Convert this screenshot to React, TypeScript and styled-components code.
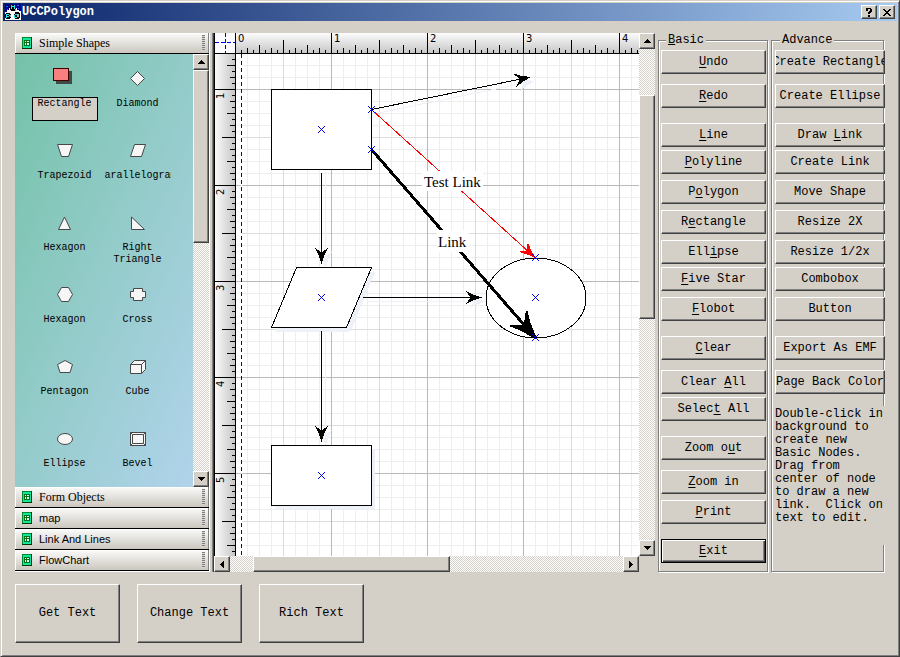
import React from "react";
import styled, { createGlobalStyle, css } from "styled-components";

const face = "#d4d0c8";
const mono = '"Liberation Mono", monospace';

const GlobalStyle = createGlobalStyle`
  *, *::before, *::after { box-sizing: border-box; }
  body { margin: 0; background: ${face}; color: #000; font: 12px/13px ${mono}; }
  button { margin: 0; padding: 0; border: 0; border-radius: 0; color: inherit; font: inherit; background: ${face}; }
  svg { display: block; }
`;

const raised = css`
  border: 1px solid;
  border-color: #fff #404040 #404040 #fff;
  box-shadow: inset -1px -1px 0 #808080;
  background: ${face};
`;

const checker = css`
  background: repeating-conic-gradient(#fff 0 25%, ${face} 0 50%) 0 0 / 2px 2px;
`;

const Window = styled.div`
  display: flex;
  flex-direction: column;
  min-height: 100vh;
  padding: 2px;
  border: 1px solid;
  border-color: ${face} #404040 #404040 ${face};
  box-shadow: inset 1px 1px 0 #fff, inset -1px -1px 0 #808080;
`;

const TitleBar = styled.header`
  display: flex;
  align-items: center;
  gap: 1px;
  height: 18px;
  padding: 0 2px;
  color: #fff;
  background: linear-gradient(to right, #0a246a, #a6caf0);
`;

const Title = styled.h1`
  flex: 1;
  margin: 0;
  font: bold 12px/16px ${mono};
`;

const CaptionButton = styled.button`
  ${raised}
  display: flex;
  align-items: center;
  justify-content: center;
  width: 16px;
  height: 14px;
  margin-left: 1px;
  color: #000;
`;

const Main = styled.main`
  display: flex;
  padding: 12px 13px 0 12px;
`;

const Sidebar = styled.nav`
  display: flex;
  flex-direction: column;
  width: 195px;
  margin-right: 2px;
  border: solid #fff;
  border-width: 0 1px 1px 0;
`;

const SectionButton = styled.button<{ $serif?: boolean }>`
  display: flex;
  align-items: center;
  gap: 7px;
  height: 21px;
  padding: 0 4px 0 7px;
  border: solid #000;
  border-width: 0 0 1px;
  box-shadow: inset -1px 0 0 #808080, inset 1px 1px 0 #fff;
  background: linear-gradient(#fbfbfa, #cbc7bf);
  text-align: left;
  font: ${(p) => (p.$serif ? '12px/16px "Liberation Serif", serif' : '11px/16px "Liberation Sans", sans-serif')};
`;

const SectionName = styled.span`
  flex: 1;
`;

const Grip = styled.span`
  width: 3px;
  height: 16px;
  background: repeating-linear-gradient(#808080 0 1px, #d8d6d2 1px 2px);
`;

const Palette = styled.div`
  display: flex;
  flex: 1;
  background: linear-gradient(to bottom right, #74c2a8, #92cbc8 45%, #b3d4ee);
`;

const ShapeGrid = styled.div`
  flex: 1;
  display: grid;
  grid-template-columns: 73px 73px;
  grid-auto-rows: 55px;
  row-gap: 17px;
  padding: 12px 0 0 13px;
`;

const ShapeButton = styled.button`
  display: flex;
  flex-direction: column;
  align-items: center;
  gap: 7px;
  background: none;
`;

const ShapeLabel = styled.span<{ $selected?: boolean }>`
  display: flex;
  justify-content: center;
  width: 66px;
  height: 24px;
  border: 1px solid ${(p) => (p.$selected ? "#000" : "transparent")};
  border-width: 1px 0;
  background: ${(p) => (p.$selected ? face : "none")};
  box-shadow: ${(p) => (p.$selected ? "inset 1px 0 0 #000, inset -1px 0 0 #000" : "none")};
  overflow: hidden;
  font: 10px/12px ${mono};
  white-space: pre;
`;

const Bar = styled.div<{ $vertical?: boolean }>`
  ${checker}
  display: flex;
  flex-direction: ${(p) => (p.$vertical ? "column" : "row")};
`;

const BarButton = styled.button`
  ${raised}
  display: flex;
  align-items: center;
  justify-content: center;
  flex: none;
  width: 16px;
  height: 16px;
`;

const Share = styled.div<{ $share: number }>`
  flex: ${(p) => p.$share} 1 0;
`;

const Thumb = styled(Share)`
  ${raised}
`;

const Canvas = styled.section`
  flex: 1;
  min-width: 0;
  display: grid;
  grid-template-columns: 22px minmax(0, 1fr) 16px;
  grid-template-rows: 21px minmax(0, 1fr) 16px;
  margin-right: 3px;
  border-left: 1px solid #808080;
  box-shadow: inset 1px 0 0 #404040;
  padding-left: 1px;
`;

const SideBar = styled(Bar)`
  grid-column: 3;
  grid-row: 1 / 3;
`;

const BottomBar = styled(Bar)`
  grid-column: 1 / 3;
  grid-row: 3;
`;

const Drawing = styled.svg`
  width: 100%;
  height: 100%;
  min-height: 0;
  overflow: hidden;
`;

const RulerText = styled.text`
  font: 10px "DejaVu Sans", sans-serif;
`;

const LinkText = styled.text`
  font: 15px "Liberation Serif", serif;
`;

const Group = styled.fieldset<{ $width: number }>`
  flex: none;
  display: flex;
  flex-direction: column;
  width: ${(p) => p.$width}px;
  min-width: 0;
  margin: 0;
  padding: 3px 2px 8px;
  border: 1px solid #808080;
  box-shadow: 1px 1px 0 #fff, inset 1px 1px 0 #fff;
`;

const BasicGroup = styled(Group)`
  margin-right: 3px;
`;

const AdvanceGroup = styled(Group)`
  padding: 3px 0 8px 3px;
`;

const Legend = styled.legend`
  margin-left: 5px;
  padding: 1px 2px 0;
  background: ${face};
  line-height: 13px;
`;

const Column = styled.div<{ $width: number }>`
  display: flex;
  flex-direction: column;
  width: ${(p) => p.$width}px;
`;

const PushButton = styled.button<{ $gap?: number; $default?: boolean }>`
  ${raised}
  display: flex;
  align-items: center;
  justify-content: center;
  height: 24px;
  margin-top: ${(p) => p.$gap ?? 0}px;
  overflow: hidden;
  white-space: pre;
  ${(p) =>
    p.$default &&
    css`
      border-color: #000;
      box-shadow: inset 1px 1px 0 #fff, inset -1px -1px 0 #404040, inset -2px -2px 0 #808080;
    `}
  u { text-underline-offset: 2px; }
`;

const Hint = styled.p`
  margin: 12px 0 0;
  padding: 2px 0 20px;
  background: ${face};
  white-space: pre-wrap;
`;

const Footer = styled.footer`
  display: flex;
  gap: 17px;
  padding: 12px 12px 0;
`;

const LargeButton = styled(PushButton)`
  width: 105px;
  height: 59px;
`;

type Dir = "up" | "down" | "left" | "right";
const arrows: Record<Dir, string> = {
  up: "M3 0h1v1h1v1h1v1h1v1H0V3h1V2h1V1h1z",
  down: "M0 0h7v1H6v1H5v1H4v1H3V3H2V2H1V1H0z",
  left: "M0 3h1V2h1V1h1V0h1v7H3V6H2V5H1V4H0z",
  right: "M0 0h1v1h1v1h1v1h1v1H3v1H2v1H1v1H0z",
};

function ScrollButton({ dir }: { dir: Dir }) {
  const upright = dir === "up" || dir === "down";
  return (
    <BarButton type="button" aria-label={`Scroll ${dir}`}>
      <svg width={upright ? 7 : 4} height={upright ? 4 : 7} shapeRendering="crispEdges">
        <path d={arrows[dir]} />
      </svg>
    </BarButton>
  );
}

const outline = { fill: "#f6f6f6", stroke: "#484848" };

const shapes: { label: string; icon: React.ReactNode }[] = [
  {
    label: "Rectangle",
    icon: (
      <>
        <rect x="3" y="5" width="16" height="13" fill="#404848" />
        <rect x="0.5" y="2.5" width="15" height="12" fill="#f88080" stroke="#400000" />
      </>
    ),
  },
  { label: "Diamond", icon: <path {...outline} d="M11.5 5.5l7 7-7 7-7-7z" /> },
  { label: "Trapezoid", icon: <path {...outline} d="M4.5 6.5h15l-4 12h-7z" /> },
  { label: "Parallelogram", icon: <path {...outline} d="M8.5 6.5h11l-4 12h-11z" /> },
  { label: "Hexagon", icon: <path {...outline} d="M11.5 7l6 12.5h-12z" /> },
  { label: "Right\nTriangle", icon: <path {...outline} d="M5.5 7l13 12.5h-13z" /> },
  { label: "Hexagon", icon: <path {...outline} d="M4.5 12.5l4-7h7l4 7-4 7h-7z" /> },
  { label: "Cross", icon: <path {...outline} d="M7.5 6.5h9v3h3v6h-3v3h-9v-3h-3v-6h3z" /> },
  { label: "Pentagon", icon: <path {...outline} d="M12 6.5l7.5 4-2.5 8H7l-2.5-8z" /> },
  {
    label: "Cube",
    icon: <path {...outline} d="M4.5 10.5l4-4h11v9l-4 4h-11zM4.5 10.5h11v9M15.5 10.5l4-4" />,
  },
  { label: "Ellipse", icon: <ellipse {...outline} cx="12" cy="13" rx="7.5" ry="5.5" /> },
  {
    label: "Bevel",
    icon: (
      <path {...outline} d="M4.5 6.5h15v13h-15zM6.5 8.5h11v9h-11zM4.5 6.5l2 2M19.5 6.5l-2 2M4.5 19.5l2-2M19.5 19.5l-2-2" />
    ),
  },
];

function Section({ name, serif }: { name: string; serif?: boolean }) {
  return (
    <SectionButton type="button" $serif={serif}>
      <svg width="10" height="12" shapeRendering="crispEdges">
        <rect width="10" height="12" fill="#003800" />
        <path d="M0 0h9v11H0z" fill="#008830" />
        <path d="M1 1h8v10H1z" fill="#10e8a0" />
        <path d="M2 3h6v6H2z" fill="#e8fff0" />
        <path d="M2 3h6v1H2zM2 8h6v1H2zM2 3h1v6H2zM7 3h1v6H7zM2 5h6v1H2zM5 3v6H4V3z" fill="#087018" />
      </svg>
      <SectionName>{name}</SectionName>
      <Grip />
    </SectionButton>
  );
}

function Corner() {
  return (
    <Drawing shapeRendering="crispEdges">
      <rect width="22" height="21" fill="#fafaff" />
      <path d="M0.5 0v21M21.5 0v21M0 20.5h22" stroke="#000" />
      <path d="M1 9.5h20M11.5 0v20" stroke="#0000e0" strokeDasharray="4 2" />
    </Drawing>
  );
}

const inch = 96;
const steps = [6, 12, 18, 24, 30, 36, 42, 48, 54, 60, 66, 72, 78, 84, 90];
const tick = (n: number) => (n === 48 ? 13 : n % 24 === 0 ? 8 : n % 12 === 0 ? 5 : 3);
const marks = Array.from({ length: 20 }, (_, i) => i);

function TopRuler() {
  return (
    <Drawing shapeRendering="crispEdges">
      <defs>
        <linearGradient id="topShade" x2="0" y2="1">
          <stop stopColor="#fcfcfc" />
          <stop offset="1" stopColor="#c4c4c4" />
        </linearGradient>
        <pattern id="topTicks" x="-1" width={inch} height="21" patternUnits="userSpaceOnUse">
          <rect width="1" height="21" />
          {steps.map((n) => (
            <rect key={n} x={n} y={20 - tick(n)} width="1" height={tick(n)} />
          ))}
        </pattern>
      </defs>
      <rect width="100%" height="21" fill="url(#topShade)" />
      <rect width="100%" height="21" fill="url(#topTicks)" />
      <rect y="20" width="100%" height="1" />
      {marks.map((n) => (
        <RulerText key={n} x={n * inch + 2} y="9">
          {n}
        </RulerText>
      ))}
    </Drawing>
  );
}

function LeftRuler() {
  return (
    <Drawing shapeRendering="crispEdges">
      <defs>
        <linearGradient id="leftShade">
          <stop stopColor="#fcfcfc" />
          <stop offset="1" stopColor="#c4c4c4" />
        </linearGradient>
        <pattern id="leftTicks" y="35" width="22" height={inch} patternUnits="userSpaceOnUse">
          <rect width="22" height="1" />
          {steps.map((n) => (
            <rect key={n} x={21 - tick(n)} y={n} width={tick(n)} height="1" />
          ))}
        </pattern>
      </defs>
      <rect width="22" height="100%" fill="url(#leftShade)" />
      <rect width="22" height="100%" fill="url(#leftTicks)" />
      <rect width="1" height="100%" />
      <rect x="21" width="1" height="100%" />
      {marks.map((n) => (
        <RulerText key={n} transform={`translate(10 ${n * inch + 45}) rotate(-90)`}>
          {n + 1}
        </RulerText>
      ))}
    </Drawing>
  );
}

type ArrowProps = { from: [number, number]; to: [number, number]; color?: string; width?: number; size?: number };

function Arrow({ from, to, color = "#000", width = 1, size = 1 }: ArrowProps) {
  const angle = (Math.atan2(to[1] - from[1], to[0] - from[0]) * 180) / Math.PI;
  const length = Math.hypot(to[1] - from[1], to[0] - from[0]);
  const endX = from[0] + ((to[0] - from[0]) * (length - 8)) / length;
  const endY = from[1] + ((to[1] - from[1]) * (length - 8)) / length;
  return (
    <g fill={color} stroke={color}>
      <path fill="none" strokeWidth={width} d={`M${from}L${endX} ${endY}`} />
      <path
        strokeWidth={(width - 1) / size}
        strokeLinejoin="round"
        transform={`translate(${to}) rotate(${angle}) scale(${size})`}
        d="M0 0L-10 3.5L-17 7L-11 0L-17 -7L-10 -3.5Z"
      />
    </g>
  );
}

const plain: ArrowProps[] = [
  { from: [135.5, 55.5], to: [295, 23] },
  { from: [85.5, 119], to: [85.5, 210] },
  { from: [85.5, 277], to: [85.5, 388] },
  { from: [127, 243.5], to: [246, 243.5] },
];

const handles = [
  [85.5, 75.5],
  [135.5, 55.5],
  [135.5, 95.5],
  [85.5, 243.5],
  [299.5, 243.5],
  [299.5, 203.5],
  [299.5, 283.5],
  [85.5, 421.5],
];

const minor = [12, 24, 36, 60, 72, 84];

function Page() {
  return (
    <Drawing shapeRendering="crispEdges">
      <defs>
        <pattern id="grid" x="-1" y="35" width={inch} height={inch} patternUnits="userSpaceOnUse">
          {minor.map((n) => (
            <path key={n} d={`M${n}.5 0v96M0 ${n}.5h96`} stroke="#eeeeee" />
          ))}
          <path d="M48.5 0v96M0 48.5h96" stroke="#dcdcdc" />
          <path d="M0.5 0v96M0 0.5h96" stroke="#bababa" />
        </pattern>
        <pattern id="edge" y="35" width="5" height={inch} patternUnits="userSpaceOnUse">
          <rect width="5" height="1" fill="#bababa" />
        </pattern>
      </defs>
      <rect width="100%" height="100%" fill="#fff" />
      <rect width="5" height="100%" fill="url(#edge)" />
      <rect x="6" width="100%" height="100%" fill="url(#grid)" />
      <line x1="5.5" x2="5.5" y1="0" y2="100%" stroke="#0000c8" strokeDasharray="4 3" />

      <g transform="translate(4 4)">
        {plain.map((a, i) => (
          <Arrow key={i} {...a} color="#eef1f7" />
        ))}
        <path d="M60.5 213.5h75l-25 60h-75z" fill="#eef1f7" />
        <rect x="35" y="391" width="100" height="60" fill="#eef1f7" />
      </g>

      <g fill="#fff" stroke="#000">
        <rect x="35.5" y="35.5" width="100" height="80" />
        <path d="M60.5 213.5h75l-25 60h-75z" />
        <rect x="35.5" y="391.5" width="100" height="60" />
        <ellipse cx="300" cy="244" rx="50" ry="40" />
      </g>

      {plain.map((a, i) => (
        <Arrow key={i} {...a} />
      ))}
      <Arrow from={[135.5, 55.5]} to={[299.5, 204]} color="#ff0000" />
      <Arrow from={[135.5, 95.5]} to={[299.5, 284]} width={3} size={1.5} />

      <rect x="186" y="117" width="61" height="20" fill="#fff" />
      <rect x="201" y="176" width="32" height="22" fill="#fff" />
      <LinkText x="188" y="133">Test Link</LinkText>
      <LinkText x="202" y="193">Link</LinkText>

      {handles.map(([x, y]) => (
        <path key={`${x} ${y}`} d={`M${x - 3.5} ${y - 3.5}l7 7M${x + 3.5} ${y - 3.5}l-7 7`} stroke="#0000e8" />
      ))}
    </Drawing>
  );
}

/* An underscore marks the letter after it as the access key. */
function Mnemonic({ text }: { text: string }) {
  const at = text.indexOf("_");
  if (at < 0) return <span>{text}</span>;
  return (
    <span>
      {text.slice(0, at)}
      <u>{text[at + 1]}</u>
      {text.slice(at + 2)}
    </span>
  );
}

const basic: [string, number][] = [
  ["_Undo", 0],
  ["_Redo", 10],
  ["_Line", 15],
  ["_Polyline", 3],
  ["P_olygon", 6],
  ["R_ectangle", 6],
  ["Ell_ipse", 6],
  ["_Five Star", 3],
  ["_Flobot", 6],
  ["_Clear", 15],
  ["Clear _All", 10],
  ["Selec_t All", 3],
  ["Zoom o_ut", 15],
  ["_Zoom in", 10],
  ["_Print", 6],
  ["_Exit", 15],
];

const advance: [string, number][] = [
  ["Create Rectangle", 0],
  ["Create Ellipse", 10],
  ["Draw _Link", 15],
  ["Create Link", 3],
  ["Move Shape", 6],
  ["Resize 2X", 6],
  ["Resize 1/2x", 6],
  ["Combobox", 3],
  ["Button", 6],
  ["Export As EMF", 15],
  ["Page Back Color", 10],
];

export default function App() {
  return (
    <Window>
      <GlobalStyle />
      <TitleBar>
        <svg width="16" height="16" shapeRendering="crispEdges">
          <rect width="16" height="16" fill="#fff" />
          <path d="M0 0h16v7h-2V6h-2V4H4v2H2v2H0z" fill="#000090" />
          <path d="M1 2h2v1H1zM12 1h2v1h-2zM2 5h1v1H2zM13 4h1v1h-1z" fill="#3060ff" />
          <path d="M5 1h5v1h1v4h-1v1H6V6H5zM1 9h4v1h1v4H5v1H1v-1H0v-4h1zM10 8h4v1h1v5h-1v1h-4v-1H9v-4h1z" />
          <path d="M6 1h1v4H6zM9 1h1v4H9zM7 2h2v1H7zM1 10h1v4H1zM2 10h2v1H2zM4 11h1v1H4zM2 12h2v1H2zM9 11h1v3H9zM10 10h2v1h-2zM10 13h2v1h-2z" fill="#20f0f0" />
          <path d="M10 5h1v2h-1zM5 11h1v2H5zM12 10h2v3h-2z" fill="#b0b0b0" />
        </svg>
        <Title>UCCPolygon</Title>
        <CaptionButton type="button" aria-label="Help">
          <svg width="8" height="9" shapeRendering="crispEdges">
            <path d="M1 0h5v1h1v3H6v1H5v1H3V4h1V3h1V1H3v2H1zM3 7h2v2H3z" />
          </svg>
        </CaptionButton>
        <CaptionButton type="button" aria-label="Close">
          <svg width="8" height="7" shapeRendering="crispEdges">
            <path d="M0 0h2v1h1v1h2V1h1V0h2v1H7v1H6v1H5v1h1v1h1v1h1v1H6V6H5V5H3v1H2v1H0V6h1V5h1V4h1V3H2V2H1V1H0z" />
          </svg>
        </CaptionButton>
      </TitleBar>

      <Main>
        <Sidebar>
          <Section name="Simple Shapes" serif />
          <Palette>
            <ShapeGrid>
              {shapes.map((s, i) => (
                <ShapeButton key={i} type="button">
                  <svg width="24" height="24">
                    {s.icon}
                  </svg>
                  <ShapeLabel $selected={i === 0}>{s.label}</ShapeLabel>
                </ShapeButton>
              ))}
            </ShapeGrid>
            <Bar $vertical>
              <ScrollButton dir="up" />
              <Thumb $share={172} />
              <Share $share={229} />
              <ScrollButton dir="down" />
            </Bar>
          </Palette>
          <Section name="Form Objects" serif />
          <Section name="map" />
          <Section name="Link And Lines" />
          <Section name="FlowChart" />
        </Sidebar>

        <Canvas>
          <Corner />
          <TopRuler />
          <SideBar $vertical>
            <ScrollButton dir="up" />
            <Share $share={46} />
            <Thumb $share={223} />
            <Share $share={222} />
            <ScrollButton dir="down" />
          </SideBar>
          <LeftRuler />
          <Page />
          <BottomBar>
            <ScrollButton dir="left" />
            <Share $share={23} />
            <Thumb $share={196} />
            <Share $share={174} />
            <ScrollButton dir="right" />
          </BottomBar>
        </Canvas>

        <BasicGroup $width={110}>
          <Legend>
            <Mnemonic text="_Basic" />
          </Legend>
          <Column $width={105}>
            {basic.map(([text, gap]) => (
              <PushButton key={text} type="button" $gap={gap} $default={text === "_Exit"}>
                <Mnemonic text={text} />
              </PushButton>
            ))}
          </Column>
        </BasicGroup>

        <AdvanceGroup $width={113}>
          <Legend>Advance</Legend>
          <Column $width={110}>
            {advance.map(([text, gap]) => (
              <PushButton key={text} type="button" $gap={gap}>
                <Mnemonic text={text} />
              </PushButton>
            ))}
            <Hint>
              {"Double-click in background to create new Basic Nodes.  Drag from center of node to draw a new link.  Click on text to edit."}
            </Hint>
          </Column>
        </AdvanceGroup>
      </Main>

      <Footer>
        <LargeButton type="button">Get Text</LargeButton>
        <LargeButton type="button">Change Text</LargeButton>
        <LargeButton type="button">Rich Text</LargeButton>
      </Footer>
    </Window>
  );
}
